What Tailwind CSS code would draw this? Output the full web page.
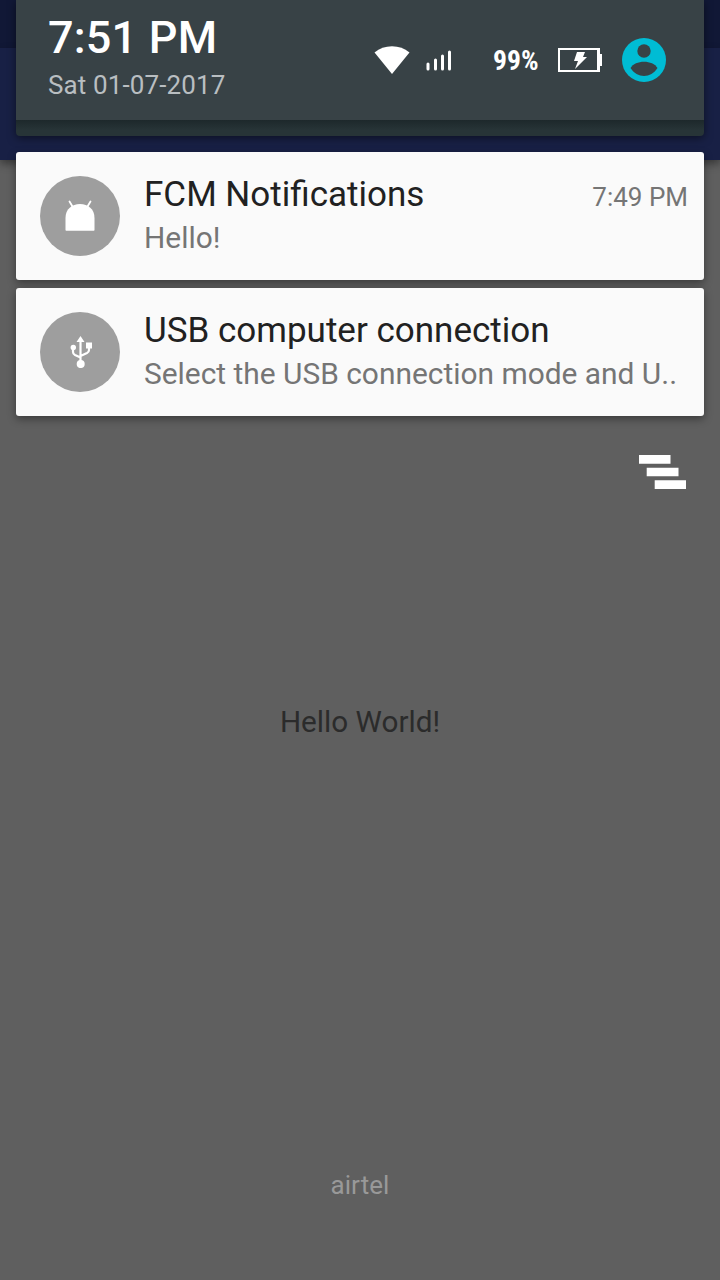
<!DOCTYPE html>
<html lang="en">
<head>
<meta charset="utf-8">
<title>Notifications</title>
<script src="https://cdn.jsdelivr.net/npm/@tailwindcss/browser@4"></script>
</head>
<body class="grid h-[1280px] w-[720px] overflow-hidden bg-[#5f5f5f] font-['Roboto',sans-serif]">
  <!-- Dimmed app behind the shade -->
  <main class="col-start-1 row-start-1 flex h-[1280px] flex-col">
    <div class="h-12 shrink-0 bg-[#111836]"></div>
    <div class="h-28 shrink-0 bg-[#182045] shadow-[0_4px_8px_rgba(0,0,0,0.4)]"></div>
    <p class="mt-[544px] text-center text-[29.700px] leading-9 text-[#2b2b2b]"><span>Hello World!</span></p>
  </main>

  <!-- Notification shade -->
  <section class="z-10 col-start-1 row-start-1 flex h-[1280px] flex-col px-4">
    <header class="h-[136px] shrink-0 rounded-b-[4px] bg-[#263238] bg-linear-to-b from-[#1d282b] from-[120px] to-[#273437] to-[130px] shadow-[0_2px_8px_rgba(0,0,0,0.5)]">
      <div class="flex h-[120px] justify-between bg-[#384246] pr-[38px] pl-8">
        <div class="pt-3 whitespace-nowrap">
          <div class="text-[45px] leading-[52px] font-medium tracking-[0.2px] text-white"><span>7:51 PM</span></div>
          <div class="mt-1.5 text-[26px] leading-[30px] tracking-[0.12px] text-[#b9bec1]"><span>Sat 01-07-2017</span></div>
        </div>
        <div class="flex items-center">
          <svg class="h-[28px] w-[36px]" viewBox="0 0 36 28" fill="#fff"><path d="M.5 6.5Q8 .2 18 .2T35.500 6.500L18 28Z"/></svg>
          <svg class="ml-4 h-[22px] w-[26px]" viewBox="0 0 26 22" stroke="#fff" stroke-width="3" stroke-linecap="round"><path d="M2 15v5M9.500 11v9M16.500 7v13M23.500 3v17"/></svg>
          <span class="mt-px ml-[41px] w-[46px] font-['Roboto_Condensed','Roboto',sans-serif] text-[28px] leading-8 font-bold whitespace-nowrap text-white"><span class="inline-block origin-left scale-x-[0.985]">99%</span></span>
          <svg class="ml-[19px] h-[26px] w-[44px]" viewBox="0 0 44 26"><path d="M1 2h40v22H1z" fill="none" stroke="#fff" stroke-width="2"/><path d="M39 1h3v6h2v12h-2v6h-3z" fill="#fff"/><path d="M19 5h8l-2 5h4L17 22l3-8h-4z" fill="#fff"/></svg>
          <svg class="ml-5 size-[44px]" viewBox="0 0 44 44"><circle cx="22" cy="22" r="22" fill="#00bcd4"/><circle cx="22" cy="13" r="6.700" fill="#384246"/><path d="M8.500 30C13 21.500 31 21.500 35.500 30C29 40.500 15 40.500 8.500 30Z" fill="#384246"/></svg>
        </div>
      </div>
    </header>

    <article class="mt-4 flex h-32 shrink-0 rounded-[3px] bg-[#fafafa] pt-[21px] pr-4 pl-6 shadow-[0_3px_8px_rgba(0,0,0,0.4)]">
      <div class="mt-[3px] grid size-20 shrink-0 place-items-center rounded-full bg-[#9e9e9e]">
        <svg class="size-12" viewBox="0 0 48 48"><path d="M9.500 38V26C9.500 17 16 12 24 12s14.500 5 14.500 14v12q0 .7-.7.7H10.200q-.7 0-.7-.7Z" fill="#fff"/><path d="m13.500 9.500 3 5M34.500 9.500l-3 5" stroke="#fff" stroke-width="1.800" stroke-linecap="round"/></svg>
      </div>
      <div class="ml-6 min-w-0 flex-1 whitespace-nowrap">
        <div class="flex h-[42px] items-start justify-between">
          <h2 class="text-[35px] leading-[43px] text-[#212121]"><span>FCM Notifications</span></h2>
          <time class="text-[26px] leading-[48px] text-[#757575]"><span>7:49 PM</span></time>
        </div>
        <p class="mt-[5px] text-[29.900px] leading-9 text-[#757575]"><span>Hello!</span></p>
      </div>
    </article>

    <article class="mt-2 flex h-32 shrink-0 rounded-[3px] bg-[#fafafa] pt-[21px] pr-4 pl-6 shadow-[0_3px_8px_rgba(0,0,0,0.4)]">
      <div class="mt-[3px] grid size-20 shrink-0 place-items-center rounded-full bg-[#9e9e9e]">
        <svg class="size-12" viewBox="0 0 48 48" fill="#fff"><path d="M24.500 12v28M17 20v4q0 2 2 3l5.500 2.500M33 18v4q0 2-2 3l-6.500 3" fill="none" stroke="#fff" stroke-width="2.200"/><path d="m24.500 8 4 6h-8zM30 14.500h6v6h-6z"/><circle cx="17.300" cy="19.500" r="2.700"/><circle cx="24.700" cy="36" r="4"/></svg>
      </div>
      <div class="ml-6 min-w-0 flex-1 whitespace-nowrap">
        <h2 class="h-[42px] text-[35px] leading-[43px] text-[#212121]"><span>USB computer connection</span></h2>
        <p class="mt-[5px] text-[29.900px] leading-9 text-[#757575]"><span>Select the USB connection mode and U..</span></p>
      </div>
    </article>

    <svg class="mt-[39px] mr-[18px] h-[34px] w-[47px] shrink-0 self-end" viewBox="0 0 47 34" fill="#fff"><path d="M0 0h31.500v8.700H0zM7.700 12.700h31.800v8.600H7.700zM15.700 25.200H47V34H15.700z"/></svg>

    <footer class="mt-auto mb-[79px] text-center text-[26px] leading-8 tracking-[0.1px] text-[#999]"><span>airtel</span></footer>
  </section>
</body>
</html>
